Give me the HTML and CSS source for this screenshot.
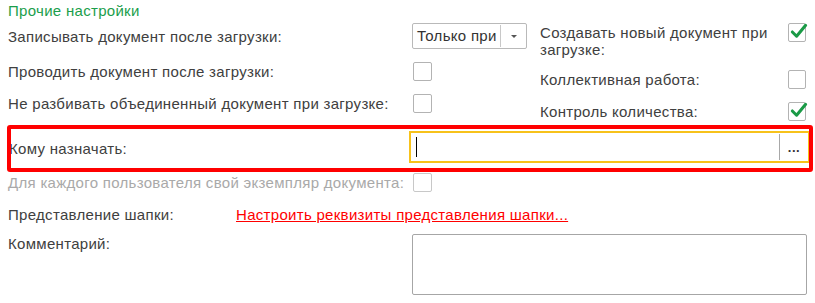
FILE: index.html
```html
<!DOCTYPE html>
<html lang="ru">
  <head>
    <meta charset="UTF-8" />
    <meta name="viewport" content="width=device-width, initial-scale=1.0" />
    <title>Прочие настройки</title>
    <link rel="stylesheet" href="styles.css">
  </head>
  <body>
    <!-- Группа: Прочие настройки -->
    <section class="settings">
      <h2 class="settings__title">Прочие настройки</h2>

      <div class="settings__top">
        <div class="settings__col settings__col--left">
          <div class="field">
            <span class="field__label">Записывать документ после загрузки:</span>
            <div class="select">
              <span class="select__value">Только при</span>
              <span class="select__btn"><span class="select__arrow"></span></span>
            </div>
          </div>
          <div class="field">
            <span class="field__label">Проводить документ после загрузки:</span>
            <span class="checkbox"></span>
          </div>
          <div class="field">
            <span class="field__label">Не разбивать объединенный документ при загрузке:</span>
            <span class="checkbox"></span>
          </div>
        </div>

        <div class="settings__col settings__col--right">
          <div class="field field--top">
            <span class="field__label field__label--wrap">Создавать новый документ при загрузке:</span>
            <span class="checkbox checkbox--checked">
              <svg class="checkbox__mark" viewBox="0 0 20 20"><path d="M3.5 10.5 L8 15 L17.5 3.5" /></svg>
            </span>
          </div>
          <div class="field">
            <span class="field__label field__label--wrap">Коллективная работа:</span>
            <span class="checkbox"></span>
          </div>
          <div class="field">
            <span class="field__label field__label--wrap">Контроль количества:</span>
            <span class="checkbox checkbox--checked">
              <svg class="checkbox__mark" viewBox="0 0 20 20"><path d="M3.5 10.5 L8 15 L17.5 3.5" /></svg>
            </span>
          </div>
        </div>
      </div>

      <!-- Поле выделено красной рамкой -->
      <div class="field field--assign">
        <span class="field__label field__label--assign">Кому назначать:</span>
        <div class="input input--focus">
          <span class="input__cursor"></span>
          <span class="input__btn">...</span>
        </div>
        <div class="highlight"></div>
      </div>

      <div class="field field--disabled">
        <span class="field__label">Для каждого пользователя свой экземпляр документа:</span>
        <span class="checkbox checkbox--disabled"></span>
      </div>

      <div class="field field--link">
        <span class="field__label field__label--short">Представление шапки:</span>
        <a href="#" class="link">Настроить реквизиты представления шапки...</a>
      </div>

      <div class="field field--comment">
        <span class="field__label">Комментарий:</span>
        <div class="textarea"></div>
      </div>
    </section>
  </body>
</html>
```

FILE: styles.css
```css
/* Общие настройки */
body {
  margin: 0;
  background-color: #fff;
  font-family: "Liberation Sans", Arial, sans-serif;
  font-size: 15px;
  line-height: 17px;
  letter-spacing: 0.3px;
  color: #404040;
}

.settings {
  padding: 2px 5px 0 8px;
}

.settings__title {
  margin: 0;
  font-size: 15px;
  font-weight: normal;
  color: #1b9e4b;
}

/* Верхний блок из двух колонок */
.settings__top {
  display: flex;
  margin-top: 4px;
}

.settings__col {
  display: flex;
  flex-direction: column;
  gap: 13px;
}

.settings__col--left {
  width: 532px;
}

.settings__col--right {
  width: 266px;
}

.settings__col--right .field:nth-child(2) {
  margin-top: -1px;
}

.field {
  display: flex;
  align-items: center;
  min-height: 19px;
}

.field--top {
  align-items: flex-start;
}

.field__label {
  flex: none;
  width: 404px;
  white-space: nowrap;
}

.field__label--wrap {
  width: 247px;
  white-space: normal;
}

.field--top .field__label {
  margin-top: 1px;
}

/* Выпадающий список */
.select {
  display: flex;
  width: 113px;
  height: 24px;
  border: 1px solid #b9b9b9;
  border-radius: 2px;
}

.select__value {
  flex: 1;
  padding-left: 4px;
  line-height: 24px;
  letter-spacing: 0.3px;
  color: #333;
  white-space: nowrap;
  overflow: hidden;
}

.select__btn {
  display: flex;
  align-items: center;
  justify-content: center;
  flex: none;
  width: 25px;
  border-left: 1px solid #c8c8c8;
  margin: 1px 0;
}

.select__arrow {
  width: 0;
  height: 0;
  border-left: 3px solid transparent;
  border-right: 3px solid transparent;
  border-top: 3px solid #555;
}

/* Флажки */
.checkbox {
  box-sizing: border-box;
  display: block;
  position: relative;
  width: 19px;
  height: 19px;
  margin-left: 1px;
  border: 1px solid #b3b3b3;
  border-radius: 2px;
  background-color: #fff;
}

.checkbox--disabled {
  border-color: #c8c8c8;
}

.checkbox__mark {
  position: absolute;
  left: 0;
  top: -2px;
  width: 19px;
  height: 19px;
  overflow: visible;
}

.checkbox__mark path {
  fill: none;
  stroke: #1a9a46;
  stroke-width: 3.2;
  stroke-linecap: round;
  stroke-linejoin: round;
}

/* Поле ввода "Кому назначать" */
.field--assign {
  position: relative;
  margin-top: 10px;
}

.field__label--assign {
  width: 401px;
  margin-left: 1px;
  margin-top: 2px;
}

.input {
  box-sizing: border-box;
  display: flex;
  align-items: center;
  flex: 1;
  height: 32px;
  margin-left: -1px;
  border: 2px solid #f7c21b;
}

.input__cursor {
  width: 1px;
  height: 20px;
  margin-left: 5px;
  background-color: #000;
}

.input__btn {
  margin-left: auto;
  width: 28px;
  height: 26px;
  border-left: 1px solid #a8a8a8;
  text-align: center;
  line-height: 28px;
  font-weight: bold;
  font-size: 13px;
  letter-spacing: 0.5px;
  color: #333;
}

.highlight {
  position: absolute;
  top: -6px;
  left: -1px;
  right: -3px;
  bottom: -9px;
  border: 4px solid #ff0000;
  border-radius: 3px;
  pointer-events: none;
}

/* Нижние поля */
.field--disabled {
  margin-top: 10px;
  color: #a9a9a9;
}

.field--link {
  margin-top: 13px;
}

.field__label--short {
  width: 228px;
}

.link {
  color: #ff0000;
  text-decoration: underline;
}

.field--comment {
  align-items: flex-start;
  margin-top: 10px;
}

.field--comment .field__label {
  margin-top: 1px;
}

.textarea {
  box-sizing: border-box;
  width: 395px;
  height: 61px;
  border: 1px solid #a6a6a6;
  border-radius: 2px;
}
```
